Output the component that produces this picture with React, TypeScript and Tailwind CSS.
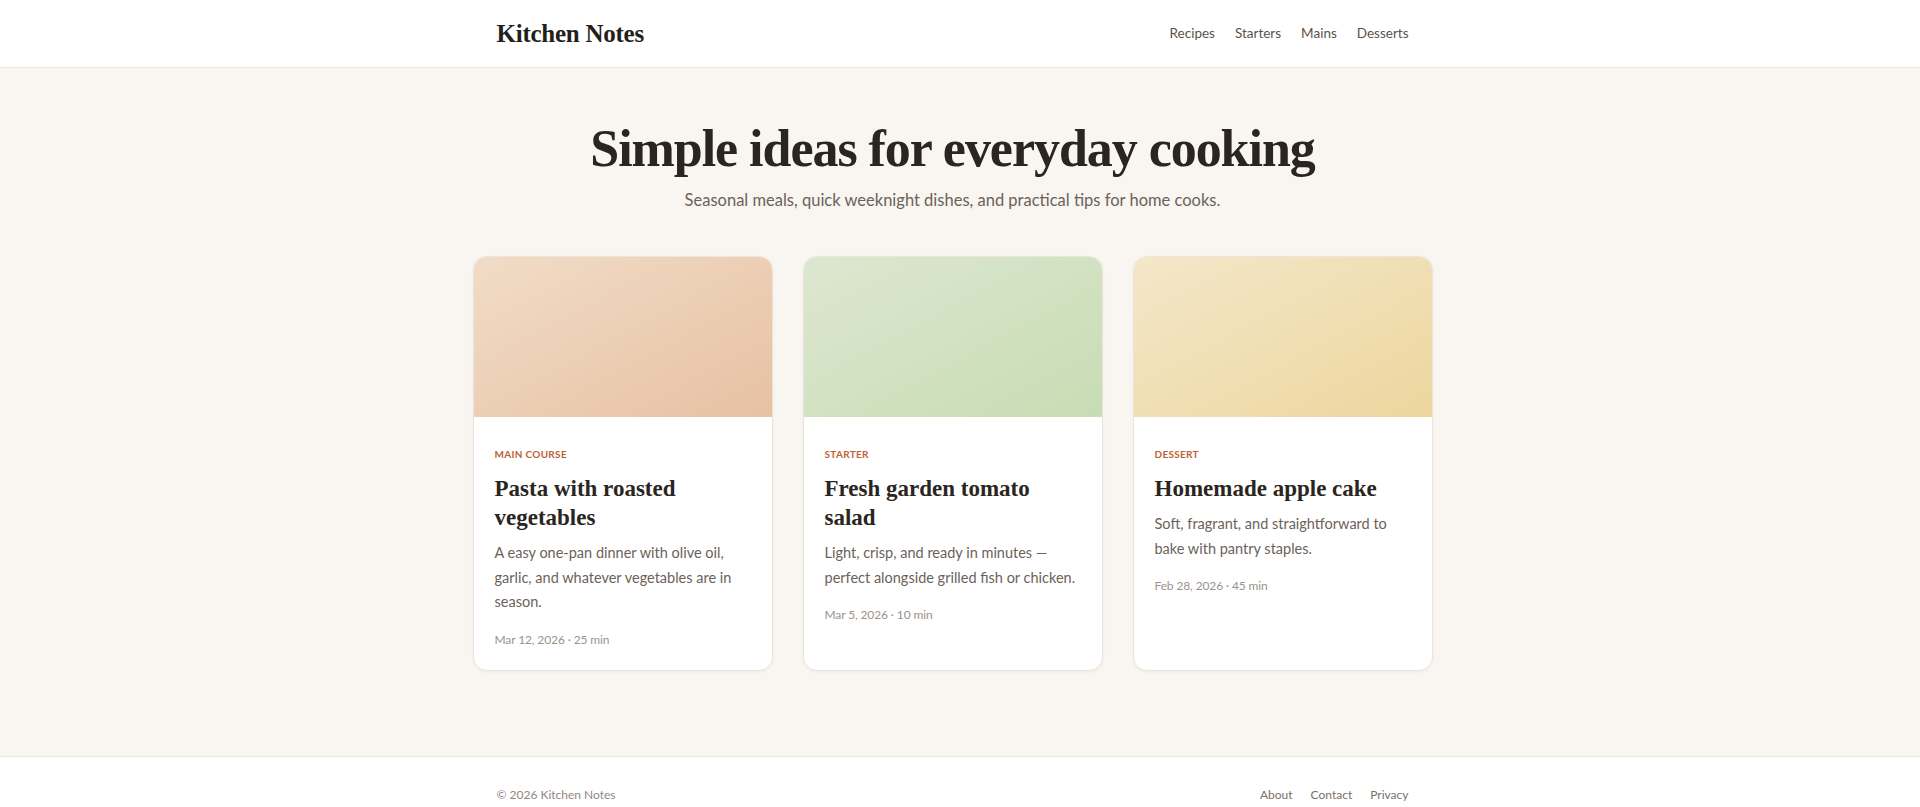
const recipes = [
  {
    category: 'Main course',
    title: 'Pasta with roasted vegetables',
    text: 'A easy one-pan dinner with olive oil, garlic, and whatever vegetables are in season.',
    meta: 'Mar 12, 2026 · 25 min',
    art: 'bg-gradient-to-br from-[#f1dcc7] to-[#e7c1a2]',
  },
  {
    category: 'Starter',
    title: 'Fresh garden tomato salad',
    text: 'Light, crisp, and ready in minutes — perfect alongside grilled fish or chicken.',
    meta: 'Mar 5, 2026 · 10 min',
    art: 'bg-gradient-to-br from-[#dde7d0] to-[#c7dcb4]',
  },
  {
    category: 'Dessert',
    title: 'Homemade apple cake',
    text: 'Soft, fragrant, and straightforward to bake with pantry staples.',
    meta: 'Feb 28, 2026 · 45 min',
    art: 'bg-gradient-to-br from-[#f4e7c9] to-[#edd69e]',
  },
];

const serif = "font-['Liberation_Serif',serif]";

function RecipeCard({ recipe }: { recipe: (typeof recipes)[number] }) {
  return (
    <article className="overflow-hidden rounded-[14px] border border-[#ebe5dc] bg-white shadow-[0_1px_3px_rgba(60,40,20,0.06)]">
      <div className={`h-[160px] ${recipe.art}`} />
      <div className="px-[21px] pt-[29px] pb-[20px]">
        <span className="block text-[10px] leading-4 font-bold tracking-[0.03em] text-[#bf5f36] uppercase">
          {recipe.category}
        </span>
        <h3 className={`mt-3 text-[23px] leading-[29px] font-bold text-[#2a2520] ${serif}`}>
          {recipe.title}
        </h3>
        <p className="mt-[9px] text-[14.5px] leading-[24.5px] text-[#6b625a]">{recipe.text}</p>
        <p className="mt-[15px] text-[12px] leading-5 tracking-[-0.01em] text-[#9b938b]">{recipe.meta}</p>
      </div>
    </article>
  );
}

export default function App() {
  return (
    <div className="min-h-screen bg-white font-['Lato',sans-serif] text-[#2a2520]">
      {/* the reference lays out as if a 15px scrollbar gutter sat on the right */}
      <header className="border-b border-[#ece6dd] bg-white pr-[15px]">
        <div className="mx-auto flex h-[67px] max-w-[960px] items-center justify-between px-6">
          <a href="#" className={`text-[25px] font-bold tracking-[-0.01em] text-[#231f1b] ${serif}`}>
            Kitchen Notes
          </a>
          <nav className="flex items-center gap-[20px] text-[13.5px] text-[#5a524a]">
            <a href="#">Recipes</a>
            <a href="#">Starters</a>
            <a href="#">Mains</a>
            <a href="#">Desserts</a>
          </nav>
        </div>
      </header>

      <main className="bg-[#f9f6f1] pt-[50px] pr-[15px] pb-[85px]">
        <div className="mx-auto max-w-[960px] text-center">
          <h1 className={`text-[52px] leading-[62px] font-bold tracking-[-0.02em] text-[#2a2520] ${serif}`}>
            Simple ideas for everyday cooking
          </h1>
          <p className="mt-[7px] text-[16.5px] leading-[27px] text-[#6b625a]">
            Seasonal meals, quick weeknight dishes, and practical tips for home cooks.
          </p>
        </div>

        <div className="mx-auto mt-[42px] grid max-w-[960px] grid-cols-3 gap-[30px]">
          {recipes.map((recipe) => (
            <RecipeCard key={recipe.title} recipe={recipe} />
          ))}
        </div>
      </main>

      <footer className="border-t border-[#ece6dd] bg-white pr-[15px]">
        <div className="mx-auto flex max-w-[960px] items-center justify-between px-6 py-[28px] text-[12px] leading-5 text-[#8f877f]">
          <span>© 2026 Kitchen Notes</span>
          <nav className="flex items-center gap-[18px] text-[#7a7169]">
            <a href="#">About</a>
            <a href="#">Contact</a>
            <a href="#">Privacy</a>
          </nav>
        </div>
      </footer>
    </div>
  );
}
